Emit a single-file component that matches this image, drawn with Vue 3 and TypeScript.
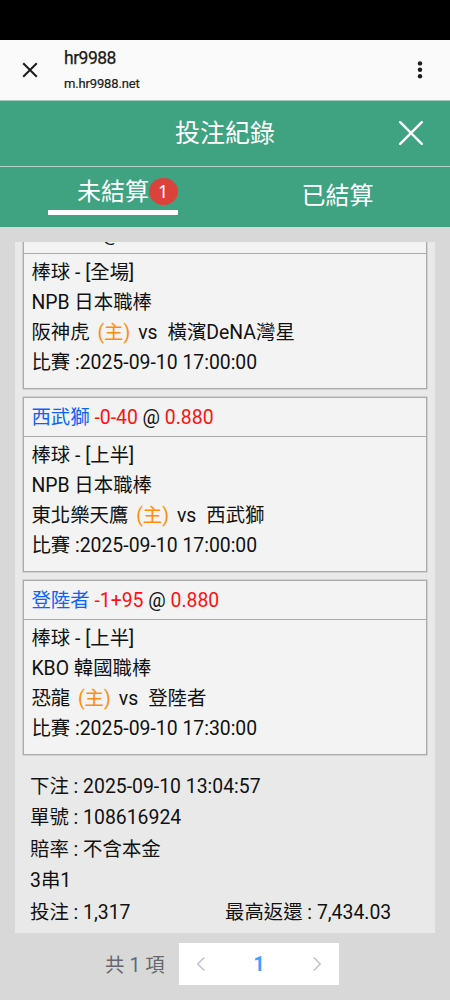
<script setup lang="ts">
interface Bet {
  pick: string
  handicap: string
  odds: string
  period: string
  league: string
  home: string
  away: string
  time: string
}

const bets: Bet[] = [
  { pick: 'Over', handicap: '11', odds: '0.880', period: '全場', league: 'NPB 日本職棒', home: '阪神虎', away: '橫濱DeNA灣星', time: '2025-09-10 17:00:00' },
  { pick: '西武獅', handicap: '-0-40', odds: '0.880', period: '上半', league: 'NPB 日本職棒', home: '東北樂天鷹', away: '西武獅', time: '2025-09-10 17:00:00' },
  { pick: '登陸者', handicap: '-1+95', odds: '0.880', period: '上半', league: 'KBO 韓國職棒', home: '恐龍', away: '登陸者', time: '2025-09-10 17:30:00' },
]
</script>

<template>
  <div class="screen">
    <div class="status"></div>
    <header class="browser">
      <svg class="close" viewBox="0 0 16 16"><path d="M1.2 1.2 14.8 14.8M14.8 1.2 1.2 14.8" /></svg>
      <div class="site">
        <div class="name">hr9988</div>
        <div class="host">m.hr9988.net</div>
      </div>
      <svg class="more" viewBox="0 0 6 18"><circle cx="3" cy="2.4" r="2.2" /><circle cx="3" cy="8.8" r="2.2" /><circle cx="3" cy="15.2" r="2.2" /></svg>
    </header>
    <div class="title">
      <span>投注紀錄</span>
      <svg class="dismiss" viewBox="0 0 24 24"><path d="M1.2 1.2 22.8 22.8M22.8 1.2 1.2 22.8" /></svg>
    </div>
    <nav class="tabs">
      <div class="tab active"><span>未結算</span><i class="badge">1</i></div>
      <div class="tab"><span>已結算</span></div>
    </nav>
    <main class="panel">
      <div class="cards">
        <section v-for="(b, i) in bets" :key="i" class="card">
          <div class="head"><span class="pick">{{ b.pick }}</span>&nbsp;<span class="red">{{ b.handicap }}</span>&nbsp;@&nbsp;<span class="red">{{ b.odds }}</span></div>
          <div class="body">
            <div class="line">棒球 - [{{ b.period }}]</div>
            <div class="line">{{ b.league }}</div>
            <div class="line">{{ b.home }} <span class="host-mark">(主)</span><span class="vs">vs</span>{{ b.away }}</div>
            <div class="line">比賽 :{{ b.time }}</div>
          </div>
        </section>
      </div>
      <div class="summary">
        <div>下注 : 2025-09-10 13:04:57</div>
        <div>單號 : 108616924</div>
        <div>賠率 : 不含本金</div>
        <div>3串1</div>
        <div class="amounts"><span>投注 : 1,317</span><span>最高返還 : 7,434.03</span></div>
      </div>
    </main>
    <footer class="pager">
      <span class="total">共 1 項</span>
      <div class="pages">
        <svg viewBox="0 0 10 16"><path d="M8.3 1.5 1.8 8l6.5 6.5" /></svg>
        <b>1</b>
        <svg viewBox="0 0 10 16"><path d="M1.7 1.5 8.2 8l-6.5 6.5" /></svg>
      </div>
    </footer>
  </div>
</template>

<style>
html, body { overflow: hidden; background: #d8d8d8; }
</style>

<style scoped>
* { box-sizing: border-box; }
svg { display: block; fill: none; }
.screen {
  width: 450px;
  height: 1000px;
  overflow: hidden;
  display: flex;
  flex-direction: column;
  background: #d8d8d8;
  color: #111;
  font-family: Roboto, "Noto Sans CJK TC", sans-serif;
  font-size: 19.4px;
}
.status { height: 40px; background: #000; }
.browser {
  height: 60px;
  display: flex;
  align-items: center;
  padding: 0 27px 0 22px;
  background: #fafafa;
}
.close { width: 16px; height: 16px; stroke: #1c1c1c; stroke-width: 2; }
.site { flex: 1; margin-left: 26px; color: #1c1c1c; }
.name { font-size: 17.5px; line-height: 24px; letter-spacing: -0.5px; padding-top: 3px; -webkit-text-stroke: 0.25px #1c1c1c; }
.host { font-size: 13px; line-height: 27px; letter-spacing: -0.15px; -webkit-text-stroke: 0.2px #1c1c1c; }
.more { width: 6px; height: 18px; fill: #1c1c1c; }
.title {
  height: 67px;
  display: flex;
  align-items: center;
  justify-content: flex-end;
  padding-right: 27px;
  background: #3fa280;
  border-top: 1px solid #a9c9bd;
  border-bottom: 1px solid #b4d0c6;
  color: #fff;
  font-size: 25px;
}
.title span { margin-right: 124px; line-height: 64px; }
.dismiss { width: 24px; height: 24px; margin-bottom: 2px; stroke: #fff; stroke-width: 2.4; stroke-linecap: round; }
.tabs {
  height: 60px;
  display: grid;
  grid-template-columns: 225px 225px;
  background: #3fa280;
  color: #fff;
  font-size: 24px;
}
.tab { display: flex; justify-content: center; line-height: 58px; }
.tab.active {
  width: 130px;
  height: 48px;
  margin-left: 47.5px;
  line-height: 50px;
  justify-content: flex-end;
  border-bottom: 5px solid #fff;
}
.badge {
  width: 28.5px;
  height: 27px;
  margin-top: 11px;
  border-radius: 50%;
  background: #dc423c;
  font: 400 18px/26px "Noto Sans", sans-serif;
  text-align: center;
}
.panel {
  height: 691px;
  margin: 15px 15px 0;
  padding: 0 8px;
  overflow: hidden;
  background: #e9e9e9;
}
.cards {
  height: 513px;
  display: flex;
  flex-direction: column;
  justify-content: flex-end;
  gap: 8px;
}
.card { flex: none; height: 175px; border: 1px solid #aaa; box-shadow: 0 0 0 0.5px #bbb; background: #f3f3f3; }
.head {
  height: 39px;
  padding-left: 7.4px;
  line-height: 39px;
  border-bottom: 1px solid #aaa;
}
.body { padding: 4px 0 0 7.4px; }
.line { height: 30px; line-height: 29px; white-space: pre; }
.pick { color: #0e62fb; }
.red { color: #f11; }
.host-mark { color: #ff8d0a; margin-left: 3px; }
.vs { margin: 0 10px 0 8px; }
.summary { padding: 16px 0 0 7px; line-height: 31.4px; }
.summary > div { height: 31.4px; white-space: pre; }
.amounts { display: grid; grid-template-columns: 195px auto; }
.pager { display: flex; align-items: center; height: 42px; margin: 10px 0 0 105px; color: #66686c; }
.total { width: 74px; letter-spacing: 0.1px; margin-top: -2px; }
.pages {
  width: 160px;
  height: 42px;
  display: flex;
  align-items: center;
  justify-content: space-between;
  padding: 0 17px;
  background: #fff;
}
.pages svg { width: 10px; height: 16px; stroke: #c0c4cc; stroke-width: 1.6; }
.pages b { color: #409eff; font-weight: 700; }
</style>
